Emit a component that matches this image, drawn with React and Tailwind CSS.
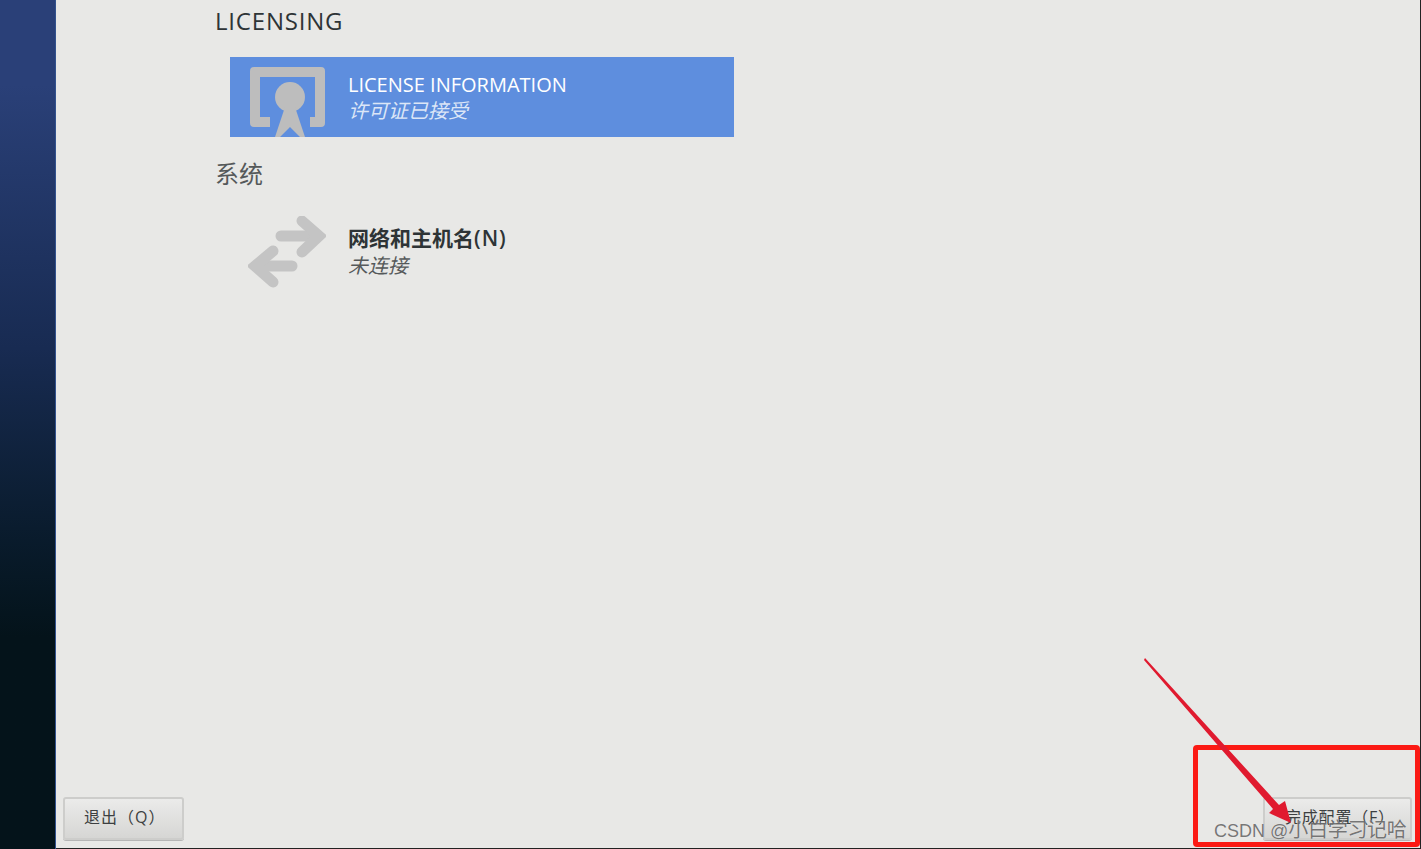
function LicenseIcon() {
  return (
    <svg width="76" height="70" viewBox="0 0 76 70" className="shrink-0">
      <path d="M20 60H4a4 4 0 0 1-4-4V4a4 4 0 0 1 4-4h67a4 4 0 0 1 4 4v52a4 4 0 0 1-4 4H60v-10h5V10H10v40h10z" fill="#bdbdbd" />
      <circle cx="40" cy="30" r="15" fill="#bdbdbd" />
      <path d="M35 40h10l10 30H50L40 60 30 70H25z" fill="#bdbdbd" />
    </svg>
  );
}
function NetIcon() {
  return (
    <svg width="78" height="72" viewBox="0 0 78 72" className="shrink-0">
      <g fill="none" stroke="#c4c4c4" strokeLinecap="round" strokeLinejoin="miter">
        <path d="M33 20H66" strokeWidth="11" />
        <path d="M54 5L71 20L54 36" strokeWidth="11" />
        <path d="M44 50H10" strokeWidth="11" />
        <path d="M25 35L7 50L25 66" strokeWidth="11" />
      </g>
    </svg>
  );
}
function Btn({ children, className }) {
  return (
    <div className={"h-[43px] flex items-center pb-[3px] rounded-[3px] border-2 border-[#cdcdcb] bg-gradient-to-b from-[#ebebea] to-[#d6d6d4] text-[16px] text-[#3c3f41] shadow-[0_1px_0_#b5b5b5] " + className}>
      {children}
    </div>
  );
}
export default function App() {
  return (
    <div className="relative w-[1421px] h-[849px] overflow-hidden flex bg-[#e8e8e6] font-['Open_Sans','Noto_Sans_CJK_SC',sans-serif]">
      <aside className="w-[56px] shrink-0 bg-gradient-to-b from-[#2a4078] from-10% via-[#182b52] via-[41%] to-[#04131a] to-[75%] border-r border-[#33538f]" />
      <main className="flex-1 flex flex-col border-b border-b-[#222] border-r border-r-[#222] pl-[159px]">
        <h2 className="h-[41px] flex items-center text-[24px] font-normal text-[#2e3436] tracking-[0.8px] leading-none">LICENSING</h2>
        <div className="mt-[16px] ml-[15px] w-[504px] h-[80px] bg-[#5e8ede] flex items-start pl-[20px] pt-[10px] gap-[22px] overflow-hidden">
          <LicenseIcon />
          <div className="flex flex-col pt-[4px]">
            <span className="text-[20px] leading-[27px] text-white font-medium">LICENSE INFORMATION</span>
            <span className="text-[20px] leading-[26px] italic text-[#dce6f7]">许可证已接受</span>
          </div>
        </div>
        <h2 className="mt-[22px] h-[30px] flex items-center text-[24px] font-normal text-[#55595a] leading-none">系统</h2>
        <div className="mt-[27px] ml-[15px] flex items-start pl-[18px] gap-[22px]">
          <NetIcon />
          <div className="flex flex-col pt-[9px]">
            <span className="text-[21px] leading-[27px] font-semibold text-[#2e3436]">网络和主机名<span className="tracking-[1px]">(N)</span></span>
            <span className="text-[20px] leading-[27px] italic text-[#55595a]">未连接</span>
          </div>
        </div>
        <div className="mt-auto mb-[8px] -ml-[152px] mr-[8px] flex justify-between">
          <Btn className="w-[121px] pl-[19px] tracking-[1px]">退出（Q）</Btn>
          <Btn className="w-[149px] pl-[20px] tracking-[0.8px]">完成配置（F）</Btn>
        </div>
      </main>
      <div className="absolute left-[1193px] top-[745px] w-[227px] h-[102px] rounded-[4px] border-[5px] border-[#fb1a14]" />
      <svg className="absolute left-0 top-0 pointer-events-none" width="1421" height="849" viewBox="0 0 1421 849">
        <path d="M1145 658L1144 660L1273 809L1269 813L1291 823L1285 801L1279 805Z" fill="#e01a2f" />
      </svg>
      <span className="absolute left-[1214px] top-[817px] text-[18px] leading-[26px] text-[#6b6b6b] opacity-90 font-['Liberation_Sans','Noto_Sans_CJK_SC',sans-serif] whitespace-nowrap [text-shadow:0_0_1px_#fff]">CSDN @<span className="text-[20px] tracking-[-0.3px]">小白学习记哈</span></span>
    </div>
  );
}
